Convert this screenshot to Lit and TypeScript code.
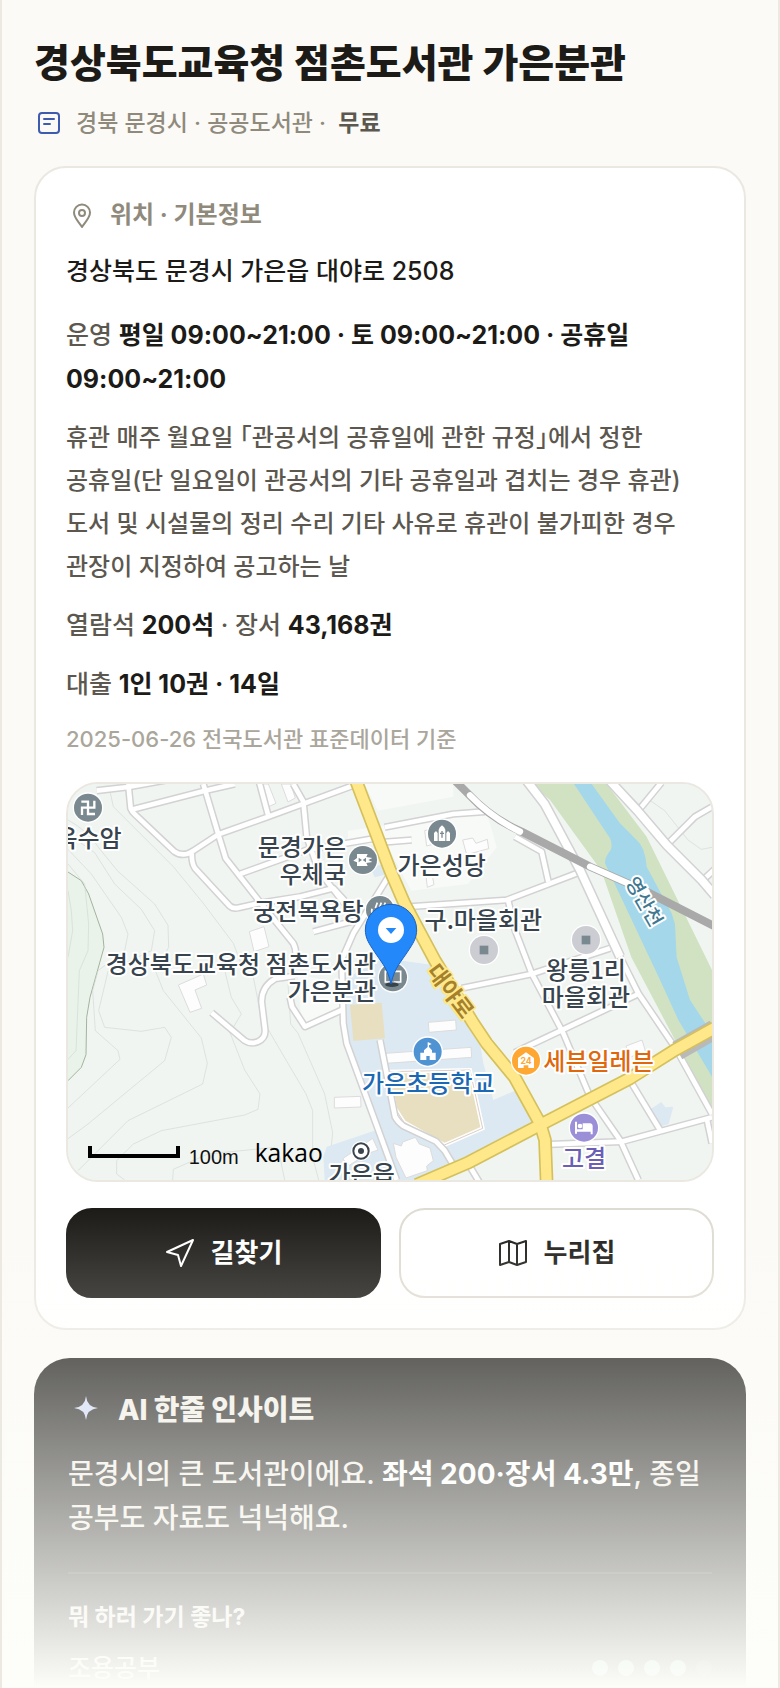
import { LitElement, html, svg, css } from "lit";
import { customElement } from "lit/decorators.js";

const minorRoads: string[] = [
  "M86 20L181 9L330-18",
  "M181 0L188 73Q192 84 204 94L318 202Q346 222 378 199L451 151L601 98L868 0",
  "M196 76L411 20L500 0",
  "M406 0L451 151L473 223L571 348L676 478Q688 500 681 540",
  "M570-20L600 92",
  "M676 0L706 53L716 158L745 240",
  "M516 270L716 198L940 160",
  "M371 208Q371 240 381 253L484 365Q496 376 512 371L571 358L696 338L796 313L830 350",
  "M766 278L830 360",
  "M736 443L856 411",
  "M431 686L530 770Q548 782 570 773Q594 762 591 736L581 654Q580 608 622 584L680 576",
  "M666 640L672 668L711 728L826 676",
  "M961 278L856 448L821 528L826 718L836 778L986 1188",
  "M936 768L981 998Q988 1012 1006 1026L1104 1072L1130 1100L1160 1150",
  "M950 130L1156 90L1251 83",
  "M940 175L1031 168",
  "M1341 158L1421 203L1441 293",
  "M1026 368L1316 348L1526 268",
  "M1321 352L1341 438L1391 568L1486 748L1566 938L1656 1068L1711 1188",
  "M1181 613L1391 570L1626 493",
  "M1340 806L1366 793L1711 630",
  "M1691 898L1776 1038",
  "M1445 1081L1661 1073L1932 1000",
  "M1916 1003L1932 1078",
  "M1206 1148L1236 1198",
  "M1656 518L1711 628L1826 798L1932 990",
  "M1711 80L1780-4",
  "M1796 183L1881 98L1940 64",
  "M1901 292L1940 256",
];

const wideRoads: string[] = [
  "M1376-10L1430 60L1536 258L1656 518",
  "M1625-10L1711 83L1796 183L1901 288L1940 334",
];

const mainRoads: string[] = [
  "M864-10L966 258L1010 360L1101 530L1216 718L1256 778L1340 880L1416 1018L1431 1068L1436 1198",
  "M1046 1202L1196 1138L1416 1023L1686 883L1821 798L1940 732",
];

const contours: string[] = [
  "M126 22L136 68L316 248L406 358L496 478L520 540",
  "M0 108Q60 140 96 196L150 262L260 360L300 424L302 490L262 560L286 620L400 762L418 838L404 900L180 1010L30 1160",
  "M0 150L80 206L140 300L220 376L260 440L250 500L120 562L92 680L110 730L220 742L290 730L310 760L290 830L60 1020L0 1064",
  "M0 196L70 270L160 400L180 450L170 500L90 560L74 620L82 740L150 800L156 826L0 972",
  "M0 240L50 300L62 420L60 500L34 560L24 800L0 826",
  "M0 320L10 380L14 440L0 520",
  "M470 558L490 640L520 690L486 746L530 858L576 930L570 976L530 993L280 1040L196 1080L146 1130L146 1170L170 1188",
  "M556 580L580 700L620 770L714 930L734 980L734 1120L752 1188",
  "M660 600L668 720L690 748L770 930L794 1046L780 1188",
  "M314 1188L316 1156L420 1110L620 1090L636 1120L650 1188",
];

const buildings: string[] = [
  "544,443 588,428 603,488 558,503",
  "571,0 601,0 624,58 598,70",
  "640,0 668,0 682,42 660,54",
  "331,603 406,570 416,603 381,618 401,673 366,685",
  "1081,715 1163,708 1165,738 1083,745",
  "953,808 1209,790 1211,820 955,838",
  "799,940 878,937 879,969 799,972",
  "976,1078 1000,1086 1004,1074 1042,1060 1054,1080 1086,1092 1096,1130 1076,1146 1078,1160 1014,1182 984,1120",
  "824,1124 914,1063 930,1098 896,1110 844,1144",
  "1184,168 1214,162 1224,178 1258,166 1262,194 1196,212",
  "1070,140 1092,134 1098,180 1076,186",
  "1074,276 1092,270 1098,302 1078,310",
  "1674,786 1722,768 1732,800 1686,820",
];

@customElement("library-map")
export class LibraryMap extends LitElement {
  static styles = css`
    :host {
      display: block;
      overflow: hidden;
      border: 2px solid #ebe8e1;
      border-radius: 32px;
      background: #f0f5f2;
    }
    .canvas {
      display: block;
      width: 100%;
      height: auto;
    }
    .casing, .lane { fill: none; stroke-linejoin: round; }
    .casing { stroke: #d2d2d2; stroke-width: 23px; }
    .lane { stroke: #ffffff; stroke-width: 14px; }
    .casing.wide { stroke-width: 32px; }
    .lane.wide { stroke-width: 23px; }
    .casing.main { stroke: #d5c15c; stroke-width: 41px; }
    .lane.main { stroke: #ffe88a; stroke-width: 31px; }
    .contour { fill: none; stroke: #d2dad2; stroke-width: 2px; }
    .building { fill: #fdfdfd; stroke: #dcdcdc; stroke-width: 3px; }
    .label {
      font-family: "Noto Sans CJK KR", sans-serif;
      font-size: 72px;
      font-weight: 500;
      fill: #37444d;
      stroke: #ffffff;
      stroke-width: 12px;
      stroke-linejoin: round;
      paint-order: stroke;
    }
    .end { text-anchor: end; }
    .mid { text-anchor: middle; }
    .school { fill: #1b69b4; }
    .store { fill: #e0680c; }
    .hotel { fill: #6a5fb5; }
    .river { font-size: 58px; fill: #3f7890; }
    .street { font-size: 66px; font-weight: 700; fill: #a5812c; stroke: #ffe88a; }
    .brand { font-family: "Open Sans", sans-serif; font-size: 74px; fill: #000000; }
    .scale { font-family: "Liberation Sans", sans-serif; font-size: 60px; fill: #111111; }
    .num { font-family: Inter, sans-serif; font-size: 26px; font-weight: 700; fill: #fea733; text-anchor: middle; }
  `;

  private roads(list: string[], kind: string) {
    return svg`
      ${list.map((d) => svg`<path class="casing ${kind}" d=${d} />`)}
      ${list.map((d) => svg`<path class="lane ${kind}" d=${d} />`)}`;
  }

  private spot(x: number, y: number, color: string, glyph: unknown) {
    return svg`<g transform="translate(${x} ${y})">
      <circle r="46" fill="#ffffff" /><circle r="42" fill=${color} />${glyph}</g>`;
  }

  render() {
    const slate = "#7a888f";
    return html`<svg class="canvas" viewBox="0 0 1932 1188" role="img" aria-label="도서관 위치 지도">
      <rect width="1932" height="1188" fill="#f0f5f2" />
      <path fill="#e9f3ea" d="M0 264L40 290L62 330L104 450L108 490L66 640L56 700L54 812L40 850L0 890Z" />
      <path fill="none" stroke="#a3b39c" stroke-width="3" d="M0 264L40 290L62 330L104 450L108 490L66 640L56 700L54 812L40 850L0 890" />
      ${contours.map((d) => svg`<path class="contour" d=${d} />`)}
      <path fill="#f8faf8" d="M890 0H1156V38L930 80ZM840 140L1256 84L1286 190L1200 300L1030 320L960 190L840 170ZM690 570L820 600V690L700 720Z" />
      <path fill="#dce9f2" d="M826 588L946 523L1096 543L1236 778L1246 838L1276 948L1346 918L1411 1018L1036 1188H770L766 1118L776 1088L926 1038L836 778ZM906 250L950 240L960 270L920 280ZM1740 980L1756 970L1780 954L1792 970L1816 968L1802 1020L1770 1030Z" />
      <path fill="#d1e2c3" d="M1390 0L1446 48L1600 260L1690 520L1932 978V558L1736 158L1616 0Z" />
      <path fill="#a4d7ea" d="M1518 0L1626 163Q1634 182 1628 198Q1610 220 1611 238L1776 588L1831 708L1932 878V748L1866 648L1826 520L1821 420L1811 388L1736 248Q1732 190 1706 168L1656 118L1571 0Z" />
      <path fill="#e8dfc0" d="M846 663L941 656L951 763L856 771Z" />
      <path fill="#e8dfc0" stroke="#ffffff" stroke-width="12" d="M961 863L1206 858L1244 1033L1129 1083L1008 1015L981 973Z" />
      <path fill="none" stroke="#c8b3a8" stroke-width="2" d="M961 863L1206 858L1244 1033L1129 1083L1008 1015L981 973Z" />
      <path fill="none" stroke="#d4d8d6" stroke-width="2" d="M1650 0L1712 60L1750 52L1790 80L1860 168L1900 196L1932 190" />
      ${buildings.map((p) => svg`<polygon class="building" points=${p} />`)}
      ${this.roads(minorRoads, "")}
      ${this.roads(wideRoads, "wide")}
      <path fill="none" stroke="#b9b9b9" stroke-width="60" d="M1828 800L1940 736" />
      ${this.roads(mainRoads, "main")}
      <path fill="none" stroke="#a9a9a9" stroke-width="24" d="M1161-10L1201 30Q1270 104 1361 143L1566 248L1736 323L1940 427" />
      <path fill="none" stroke="#ffffff" stroke-width="19" stroke-linecap="round" d="M1206 34Q1270 100 1356 143M1566 248L1736 323" />

      ${this.spot(60, 71, slate, svg`<path fill="none" stroke="#fff" stroke-width="7" d="M-20-18H0V19H21M19-21V0H-18V22" />`)}
      ${this.spot(885, 228, slate, svg`<path fill="#fff" d="M-18-18H14L10-9L28-6L16 0L28 6L10 9L14 18H-18V7L-29 2L-18-6Z" /><path fill="${slate}" d="M-13-7L-3 0L-13 7ZM9-7L-1 0L9 7Z" />`)}
      ${this.spot(936, 378, slate, svg`<path fill="none" stroke="#fff" stroke-width="5" d="M-8-22L-14-6M4-22L-2-6M16-22L10-6M-24-4Q-30 18 0 18T24-4" />`)}
      ${this.spot(1122, 149, slate, svg`<path fill="#fff" d="M-24 22V-2L-18-8L-13-2V22ZM-10 22V-12Q-8-20 0-25Q8-20 10-12V22ZM13 22V-2L18-8L24-2V22Z" /><path stroke="${slate}" stroke-width="4" d="M0-8V12M-6-1H6" />`)}
      ${this.spot(1248, 498, "#cbcdd2", svg`<rect x="-13" y="-13" width="26" height="26" fill="${slate}" />`)}
      ${this.spot(1554, 468, "#cbcdd2", svg`<rect x="-13" y="-13" width="26" height="26" fill="${slate}" />`)}
      ${this.spot(975, 580, slate, svg`<path fill="none" stroke="#fff" stroke-width="5" d="M-23-18V14H-4L0 18L4 14H23V-18H4L0-14L-4-18Z" />`)}
      ${this.spot(1079, 803, "#4f93d2", svg`<path fill="#fff" d="M2-28L12-23L4-19V-14L13-4V3H24V25H6V13H-4V25H-22V3H-11V-4L0-14V-28Z" />`)}
      ${this.spot(1374, 830, "#fea733", svg`<path fill="#fff" d="M0-25L24-8V22H7V14H-7V22H-24V-8Z" /><text class="num" y="9">24</text>`)}
      ${this.spot(1548, 1031, "#9b8fd8", svg`<path fill="#fff" d="M-27-18H-21V5H-4V-13H18Q26-12 26-4V20H20V12H-21V18H-27Z" /><circle cx="-12" cy="-5" r="7" fill="#fff" />`)}
      <circle cx="879" cy="1101" r="30" fill="#fff" />
      <circle cx="879" cy="1101" r="23" fill="#fff" stroke="#3a444c" stroke-width="6" />
      <circle cx="879" cy="1101" r="9" fill="#3a444c" />

      <text class="label end" x="161" y="190">옥수암</text>
      <text class="label end" x="834" y="217">문경가은</text>
      <text class="label end" x="834" y="297">우체국</text>
      <text class="label end" x="887" y="409">궁전목욕탕</text>
      <text class="label end" x="924" y="567">경상북도교육청 점촌도서관</text>
      <text class="label end" x="924" y="647">가은분관</text>
      <text class="label mid" x="1121" y="269">가은성당</text>
      <text class="label mid" x="1246" y="435">구.마을회관</text>
      <text class="label mid" x="1554" y="585">왕릉1리</text>
      <text class="label mid" x="1554" y="665">마을회관</text>
      <text class="label store" x="1426" y="857">세븐일레븐</text>
      <text class="label school mid" x="1081" y="924">가은초등학교</text>
      <text class="label hotel mid" x="1548" y="1149">고결</text>
      <text class="label mid" x="881" y="1198">가은읍</text>
      <text class="label street mid" transform="translate(1148 621) rotate(53)" y="24">대야로</text>
      <text class="label river mid" transform="translate(1728 353) rotate(60)" y="20">영산천</text>

      <ellipse cx="972" cy="602" rx="20" ry="7" fill="#38424a" />
      <path fill="#2389fb" stroke="#1a62c4" stroke-width="3" d="M969 600C958 548 938 534 912 492C900 474 892 458 892 438A77 77 0 0 1 1046 438C1046 458 1038 474 1026 492C1000 534 980 548 969 600Z" />
      <circle cx="969" cy="438" r="39" fill="#fff" />
      <path fill="#2389fb" d="M953 432H985L969 450Z" />

      <path fill="none" stroke="#000" stroke-width="12" d="M66 1086V1116H330V1086" />
      <text class="scale" x="362" y="1140">100m</text>
      <text class="brand" x="560" y="1133">kakao</text>
    </svg>`;
  }
}

@customElement("app-root")
export class AppRoot extends LitElement {
  static styles = css`
    :host {
      display: block;
      font-family: Inter, "Noto Sans CJK KR", sans-serif;
      font-size: 24px;
      font-weight: 500;
      color: #1c1b18;
      word-break: keep-all;
    }
    * { box-sizing: border-box; }
    h1, h2, h3, p { margin: 0; }
    .page {
      position: relative;
      max-height: 100vh;
      overflow: hidden;
      padding: 33px 32px 0;
      border: solid #ebe9e2;
      border-width: 0 2px;
      background: #fbfaf6;
    }
    .page::after {
      content: "";
      position: absolute;
      inset: auto 0 0;
      height: 480px;
      background: linear-gradient(rgba(253, 253, 250, 0), #fdfdfa);
      pointer-events: none;
    }
    .title {
      font-family: "Noto Sans CJK KR", sans-serif;
      font-size: 39px;
      font-weight: 800;
      line-height: 54px;
    }
    .meta {
      display: flex;
      align-items: center;
      gap: 12px;
      margin-top: 18px;
      line-height: 36px;
      font-size: 23px;
      color: #8f8a7c;
    }
    .meta strong { margin-left: 6px; font-weight: 700; color: #5c584f; }
    .icon { flex: none; display: block; width: 30px; height: 30px; fill: none; stroke: currentColor; stroke-width: 2; stroke-linecap: round; stroke-linejoin: round; }
    .meta .icon { color: #3f5bb0; }
    .card {
      margin-top: 25px;
      padding: 30px;
      border: 2px solid #ebe8e1;
      border-radius: 32px;
      background: #ffffff;
    }
    .card-title {
      display: flex;
      align-items: center;
      gap: 14px;
      font-size: 24px;
      line-height: 34px;
      font-weight: 700;
      color: #8f8a7c;
    }
    .address { margin-top: 19px; font-size: 25px; line-height: 40px; }
    .facts {
      display: grid;
      gap: 15px;
      margin-top: 22px;
      font-size: 25px;
      line-height: 44px;
      color: #5c584f;
    }
    .facts strong { font-weight: 700; color: #1c1b18; }
    .closed { font-size: 24px; line-height: 43px; }
    .bracket { font-feature-settings: "halt"; }
    .source { font-size: 22px; line-height: 36px; color: #aaa69b; }
    .map { margin-top: 25px; }
    .actions {
      display: grid;
      grid-template-columns: 1fr 1fr;
      gap: 18px;
      margin-top: 26px;
    }
    .action {
      display: flex;
      align-items: center;
      justify-content: center;
      gap: 16px;
      height: 90px;
      border: 2px solid #dedbd2;
      border-radius: 26px;
      background: #ffffff;
      font: inherit;
      font-size: 26px;
      font-weight: 700;
      line-height: 34px;
      color: #1c1b18;
      text-decoration: none;
    }
    .action.primary { border-color: #1c1b18; background: #1c1b18; color: #ffffff; }
    .insight {
      margin-top: 28px;
      padding: 34px;
      border-radius: 36px;
      background: #1c1b18;
      color: #f0ede4;
    }
    .insight-title {
      display: flex;
      align-items: center;
      gap: 16px;
      font-size: 28px;
      line-height: 36px;
      font-weight: 800;
    }
    .spark { width: 34px; height: 34px; fill: #cdd8f6; stroke: none; }
    .summary { margin-top: 24px; font-size: 28px; line-height: 44px; }
    .summary strong { font-weight: 700; color: #ffffff; }
    .scores { margin-top: 32px; padding-top: 28px; border-top: 2px solid #35342f; }
    .scores-title { font-size: 23px; line-height: 30px; font-weight: 700; }
    .score {
      display: flex;
      align-items: center;
      justify-content: space-between;
      margin-top: 18px;
      font-size: 25px;
      line-height: 36px;
    }
    .dots { display: flex; gap: 10px; }
    .dot { width: 16px; height: 16px; border-radius: 50%; background: #8fe0b8; }
    .dot.off { background: #3d3c37; }
  `;

  render() {
    return html`
      <main class="page">
        <h1 class="title">경상북도교육청 점촌도서관 가은분관</h1>
        <p class="meta">
          <svg class="icon" viewBox="0 0 30 30" aria-hidden="true">
            <rect x="5" y="5" width="20" height="20" rx="3" /><path d="M10 11H20M10 16H16" />
          </svg>
          <span>경북 문경시 · 공공도서관 · <strong>무료</strong></span>
        </p>

        <section class="card">
          <h2 class="card-title">
            <svg class="icon" viewBox="0 0 30 30" aria-hidden="true">
              <path d="M16 27C13 22 8 18 8 12.500A8 8 0 0 1 24 12.500C24 18 19 22 16 27Z" /><circle cx="16" cy="13" r="3" />
            </svg>
            <span>위치 · 기본정보</span>
          </h2>
          <p class="address">경상북도 문경시 가은읍 대야로 2508</p>
          <div class="facts">
            <p>운영 <strong>평일 09:00~21:00 · 토 09:00~21:00 · 공휴일 09:00~21:00</strong></p>
            <p class="closed">휴관 매주 월요일 <span class="bracket">「</span>관공서의 공휴일에 관한 규정<span class="bracket">」</span>에서 정한 공휴일(단 일요일이 관공서의 기타 공휴일과 겹치는 경우 휴관) 도서 및 시설물의 정리 수리 기타 사유로 휴관이 불가피한 경우 관장이 지정하여 공고하는 날</p>
            <p>열람석 <strong>200석</strong> · 장서 <strong>43,168권</strong></p>
            <p>대출 <strong>1인 10권 · 14일</strong></p>
            <p class="source">2025-06-26 전국도서관 표준데이터 기준</p>
          </div>
          <library-map class="map"></library-map>
          <div class="actions">
            <button class="action primary" type="button">
              <svg class="icon" viewBox="0 0 30 30" aria-hidden="true"><path d="M28 2L16 28L13 17L2 14Z" /></svg>
              <span>길찾기</span>
            </button>
            <a class="action" href="#homepage">
              <svg class="icon" viewBox="0 0 30 30" aria-hidden="true">
                <path d="M2 6L11 3L19 6L28 3V24L19 27L11 24L2 27ZM11 3V24M19 6V27" />
              </svg>
              <span>누리집</span>
            </a>
          </div>
        </section>

        <section class="insight">
          <h2 class="insight-title">
            <svg class="spark" viewBox="0 0 34 34" aria-hidden="true"><path d="M18 3Q19 14 30 15Q19 16 18 27Q17 16 6 15Q17 14 18 3Z" /></svg>
            <span>AI 한줄 인사이트</span>
          </h2>
          <p class="summary">문경시의 큰 도서관이에요. <strong>좌석 200·장서 4.3만</strong>, 종일 공부도 자료도 넉넉해요.</p>
          <div class="scores">
            <h3 class="scores-title">뭐 하러 가기 좋나?</h3>
            <div class="score">
              <span>조용공부</span>
              <span class="dots" role="img" aria-label="5점 만점에 4점">
                ${[1, 2, 3, 4, 5].map((n) => html`<span class="dot ${n > 4 ? "off" : ""}"></span>`)}
              </span>
            </div>
          </div>
        </section>
      </main>
    `;
  }
}
